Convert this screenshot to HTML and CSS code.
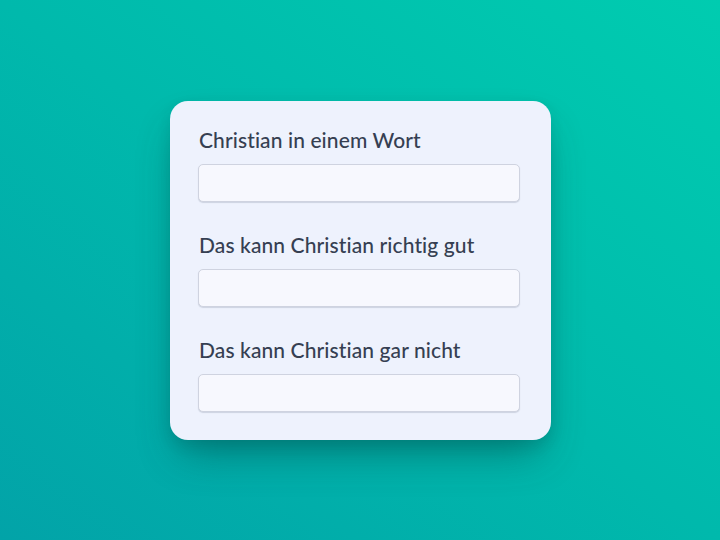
FILE: index.html
```html
<!DOCTYPE html>
<html lang="de">
<head>
<meta charset="utf-8">
<title>Christian</title>
<link rel="stylesheet" href="styles.css">
</head>
<body>
<main class="stage">
  <form class="card">
    <div class="field">
      <label class="label" for="f1">Christian in einem Wort</label>
      <input class="input" id="f1" type="text">
    </div>
    <div class="field">
      <label class="label" for="f2">Das kann Christian richtig gut</label>
      <input class="input" id="f2" type="text">
    </div>
    <div class="field">
      <label class="label" for="f3">Das kann Christian gar nicht</label>
      <input class="input" id="f3" type="text">
    </div>
  </form>
</main>
</body>
</html>
```
FILE: styles.css
```css
html, body {
  margin: 0;
  padding: 0;
  height: 100%;
}
body {
  font-family: "Lato", "Noto Sans", sans-serif;
  background: linear-gradient(to top right, #02a3a8 0%, #00b9ac 50%, #00ccb0 100%);
}
.stage {
  height: 540px;
  display: flex;
  align-items: center;
  justify-content: center;
}
.card {
  box-sizing: border-box;
  width: 381px;
  margin-left: 1px;
  margin-top: 1px;
  padding: 27px 31px 28px 28px;
  background: #eef2fd;
  border-radius: 18px;
  box-shadow: 0 22px 40px -10px rgba(0, 60, 60, 0.45), 0 6px 14px rgba(0, 50, 50, 0.12);
  display: flex;
  flex-direction: column;
  gap: 31px;
}
.field {
  display: flex;
  flex-direction: column;
  gap: 13px;
}
.label {
  font-size: 21px;
  line-height: 23px;
  font-weight: 500;
  letter-spacing: 0.1px;
  color: #363f52;
  padding-left: 1px;
}
.input {
  box-sizing: border-box;
  height: 38px;
  width: 100%;
  margin: 0;
  border: 1px solid #cfd3e0;
  border-radius: 5px;
  background: #f7f8fe;
  box-shadow: 0 1px 1px rgba(60, 70, 100, 0.18);
  font: inherit;
  font-size: 16px;
  padding: 0 10px;
  outline: none;
}
```
